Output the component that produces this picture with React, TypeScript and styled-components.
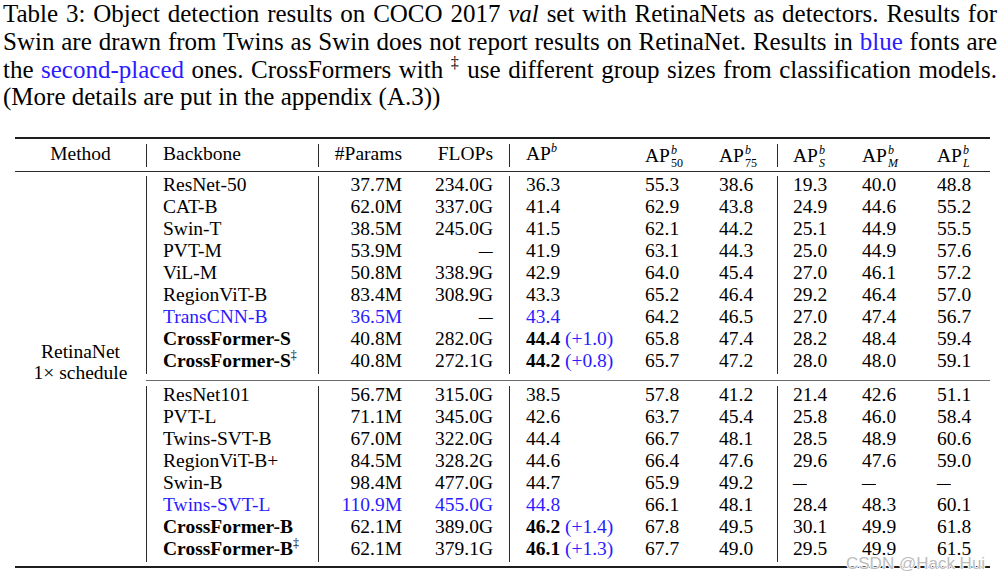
import React from 'react';
import styled, { createGlobalStyle } from 'styled-components';

const GlobalStyle = createGlobalStyle`
  html, body { margin: 0; padding: 0; background: #fff; }
  body { font-family: "Liberation Serif", "Times New Roman", serif; color: #000; }
`;

const BLUE = '#2a1cff';

type Align = 'left' | 'right' | 'center';
interface ColDef { w: number; align: Align; pl?: number; pr?: number; div?: boolean }

const COLS: ColDef[] = [
  { w: 131, align: 'center' },
  { w: 172, align: 'left', pl: 16, div: true },
  { w: 94, align: 'right', pr: 10, div: true },
  { w: 97, align: 'right', pr: 16 },
  { w: 128, align: 'left', pl: 16, div: true },
  { w: 74, align: 'left', pl: 8 },
  { w: 66, align: 'left', pl: 8 },
  { w: 77, align: 'left', pl: 15, div: true },
  { w: 75, align: 'left', pl: 8 },
  { w: 61, align: 'left', pl: 8 },
];
const BODY_COLS = COLS.slice(1);
const track = (cols: ColDef[]) => cols.map((c) => `${c.w}px`).join(' ');

const Page = styled.div`
  position: relative;
  width: 1000px;
  height: 582px;
  overflow: hidden;
  background: #fff;
`;

const Caption = styled.div`
  padding: 0 3px;
  font-size: 25px;
  line-height: 27.75px;
  height: 111px;
  color: #000;
`;

const CaptionLine = styled.div<{ $last?: boolean }>`
  text-align: justify;
  text-align-last: ${(p) => (p.$last ? 'left' : 'justify')};
`;

const Blue = styled.span`
  color: ${BLUE};
`;

const Em = styled.em`
  font-style: italic;
`;

const CapSup = styled.sup`
  font-size: 16px;
  line-height: 0;
  vertical-align: 10px;
`;

const Table = styled.div`
  margin: 26px 0 0 15px;
  width: 975px;
  display: flex;
  flex-direction: column;
  font-size: 19.5px;
`;

const Rule = styled.div<{ $w: number; $c: string; $mt: number }>`
  height: ${(p) => p.$w}px;
  background: ${(p) => p.$c};
  margin-top: ${(p) => p.$mt}px;
`;

const Row = styled.div<{ $cols: string; $mt?: number }>`
  display: grid;
  grid-template-columns: ${(p) => p.$cols};
  margin-top: ${(p) => p.$mt ?? 0}px;
`;

const Group = styled.div<{ $mt?: number }>`
  display: flex;
  flex-direction: column;
  margin-top: ${(p) => p.$mt ?? 0}px;
`;

const Cell = styled.div<{ $align: Align; $pl?: number; $pr?: number; $div?: boolean }>`
  box-sizing: border-box;
  height: 22px;
  line-height: 18px;
  padding: 0 ${(p) => p.$pr ?? 0}px 4px ${(p) => p.$pl ?? 0}px;
  text-align: ${(p) => p.$align};
  border-left: ${(p) => (p.$div ? '1px solid #2a2a2a' : 'none')};
  white-space: nowrap;
`;

const HeadCell = styled(Cell)`
  height: 23px;
  line-height: 20px;
  padding-bottom: 3px;
`;

const Body = styled.div`
  display: flex;
  margin-top: 4px;
`;

const MethodCell = styled.div`
  width: 131px;
  flex: none;
  display: flex;
  flex-direction: column;
  justify-content: center;
  align-items: center;
  line-height: 21px;
  padding-bottom: 14px;
  box-sizing: border-box;
`;

const Groups = styled.div`
  display: flex;
  flex-direction: column;
  width: 844px;
`;

const Sup = styled.span<{ $italic?: boolean }>`
  font-size: 12px;
  line-height: 0;
  vertical-align: 8px;
  font-style: ${(p) => (p.$italic ? 'italic' : 'normal')};
  font-weight: normal;
`;

const Scripts = styled.span`
  display: inline-flex;
  flex-direction: column;
  font-size: 12px;
  line-height: 13px;
  vertical-align: 8px;
  margin-left: 1px;
`;

const Script = styled.span<{ $italic?: boolean }>`
  font-style: ${(p) => (p.$italic ? 'italic' : 'normal')};
`;

const Bold = styled.span`
  font-weight: bold;
`;

const Dash = styled.span<{ $origin: 'left' | 'right' }>`
  display: inline-block;
  transform: scaleX(1.4);
  transform-origin: ${(p) => p.$origin} center;
`;

const Watermark = styled.div`
  position: absolute;
  left: 846px;
  top: 554px;
  font-family: "Liberation Sans", Arial, sans-serif;
  font-size: 17px;
  line-height: 20px;
  color: #bdbdbd;
  text-shadow: 1px 0 0 #fff, -1px 0 0 #fff, 0 1px 0 #fff, 0 -1px 0 #fff;
  white-space: nowrap;
`;

const APHead: React.FC<{ sub?: string; italic?: boolean }> = ({ sub, italic }) =>
  sub ? (
    <>
      AP
      <Scripts>
        <Script $italic>b</Script>
        <Script $italic={italic}>{sub}</Script>
      </Scripts>
    </>
  ) : (
    <>
      AP<Sup $italic>b</Sup>
    </>
  );

const HEADERS: React.ReactNode[] = [
  'Method',
  'Backbone',
  '#Params',
  'FLOPs',
  <APHead key="ap" />,
  <APHead key="ap50" sub="50" />,
  <APHead key="ap75" sub="75" />,
  <APHead key="aps" sub="S" italic />,
  <APHead key="apm" sub="M" italic />,
  <APHead key="apl" sub="L" italic />,
];

type Field = 'name' | 'params' | 'flops' | 'ap';
interface Entry {
  name: string;
  ours?: boolean;
  dagger?: boolean;
  blue?: Field[];
  gain?: string;
  vals: string[];
}

const GROUP1: Entry[] = [
  { name: 'ResNet-50', vals: ['37.7M', '234.0G', '36.3', '55.3', '38.6', '19.3', '40.0', '48.8'] },
  { name: 'CAT-B', vals: ['62.0M', '337.0G', '41.4', '62.9', '43.8', '24.9', '44.6', '55.2'] },
  { name: 'Swin-T', vals: ['38.5M', '245.0G', '41.5', '62.1', '44.2', '25.1', '44.9', '55.5'] },
  { name: 'PVT-M', vals: ['53.9M', '–', '41.9', '63.1', '44.3', '25.0', '44.9', '57.6'] },
  { name: 'ViL-M', vals: ['50.8M', '338.9G', '42.9', '64.0', '45.4', '27.0', '46.1', '57.2'] },
  { name: 'RegionViT-B', vals: ['83.4M', '308.9G', '43.3', '65.2', '46.4', '29.2', '46.4', '57.0'] },
  { name: 'TransCNN-B', blue: ['name', 'params', 'ap'], vals: ['36.5M', '–', '43.4', '64.2', '46.5', '27.0', '47.4', '56.7'] },
  { name: 'CrossFormer-S', ours: true, gain: '(+1.0)', vals: ['40.8M', '282.0G', '44.4', '65.8', '47.4', '28.2', '48.4', '59.4'] },
  { name: 'CrossFormer-S', ours: true, dagger: true, gain: '(+0.8)', vals: ['40.8M', '272.1G', '44.2', '65.7', '47.2', '28.0', '48.0', '59.1'] },
];

const GROUP2: Entry[] = [
  { name: 'ResNet101', vals: ['56.7M', '315.0G', '38.5', '57.8', '41.2', '21.4', '42.6', '51.1'] },
  { name: 'PVT-L', vals: ['71.1M', '345.0G', '42.6', '63.7', '45.4', '25.8', '46.0', '58.4'] },
  { name: 'Twins-SVT-B', vals: ['67.0M', '322.0G', '44.4', '66.7', '48.1', '28.5', '48.9', '60.6'] },
  { name: 'RegionViT-B+', vals: ['84.5M', '328.2G', '44.6', '66.4', '47.6', '29.6', '47.6', '59.0'] },
  { name: 'Swin-B', vals: ['98.4M', '477.0G', '44.7', '65.9', '49.2', '–', '–', '–'] },
  { name: 'Twins-SVT-L', blue: ['name', 'params', 'flops', 'ap'], vals: ['110.9M', '455.0G', '44.8', '66.1', '48.1', '28.4', '48.3', '60.1'] },
  { name: 'CrossFormer-B', ours: true, gain: '(+1.4)', vals: ['62.1M', '389.0G', '46.2', '67.8', '49.5', '30.1', '49.9', '61.8'] },
  { name: 'CrossFormer-B', ours: true, dagger: true, gain: '(+1.3)', vals: ['62.1M', '379.1G', '46.1', '67.7', '49.0', '29.5', '49.9', '61.5'] },
];

const FIELD_BY_INDEX: (Field | null)[] = ['params', 'flops', 'ap', null, null, null, null, null];

const renderValue = (v: string, col: ColDef) =>
  v === '–' ? <Dash $origin={col.align === 'right' ? 'right' : 'left'}>–</Dash> : v;

const BodyRow: React.FC<{ e: Entry }> = ({ e }) => {
  const isBlue = (f: Field | null) => !!f && !!e.blue?.includes(f);
  const nameCol = BODY_COLS[0];
  return (
    <Row $cols={track(BODY_COLS)}>
      <Cell $align={nameCol.align} $pl={nameCol.pl} $pr={nameCol.pr} $div={nameCol.div}>
        {e.ours ? (
          <Bold>
            {e.name}
            {e.dagger && <Sup>‡</Sup>}
          </Bold>
        ) : isBlue('name') ? (
          <Blue>{e.name}</Blue>
        ) : (
          e.name
        )}
      </Cell>
      {e.vals.map((v, i) => {
        const col = BODY_COLS[i + 1];
        const field = FIELD_BY_INDEX[i];
        let content: React.ReactNode = renderValue(v, col);
        if (field === 'ap' && e.gain) {
          content = (
            <>
              <Bold>{v}</Bold> <Blue>{e.gain}</Blue>
            </>
          );
        } else if (isBlue(field)) {
          content = <Blue>{content}</Blue>;
        }
        return (
          <Cell key={i} $align={col.align} $pl={col.pl} $pr={col.pr} $div={col.div}>
            {content}
          </Cell>
        );
      })}
    </Row>
  );
};

export default function App() {
  return (
    <>
      <GlobalStyle />
      <Page>
        <Caption>
          <CaptionLine>
            Table 3: Object detection results on COCO 2017 <Em>val</Em> set with RetinaNets as detectors. Results for
          </CaptionLine>
          <CaptionLine>
            Swin are drawn from Twins as Swin does not report results on RetinaNet. Results in <Blue>blue</Blue> fonts are
          </CaptionLine>
          <CaptionLine>
            the <Blue>second-placed</Blue> ones. CrossFormers with <CapSup>‡</CapSup> use different group sizes from classification models.
          </CaptionLine>
          <CaptionLine $last>(More details are put in the appendix (A.3))</CaptionLine>
        </Caption>

        <Table>
          <Rule $w={2} $c="#1e1e1e" $mt={0} />
          <Row $cols={track(COLS)} $mt={5}>
            {HEADERS.map((h, i) => (
              <HeadCell key={i} $align={COLS[i].align} $pl={COLS[i].pl} $pr={COLS[i].pr} $div={COLS[i].div}>
                {h}
              </HeadCell>
            ))}
          </Row>
          <Rule $w={1} $c="#2a2a2a" $mt={4} />
          <Body>
            <MethodCell>
              <div>RetinaNet</div>
              <div>1× schedule</div>
            </MethodCell>
            <Groups>
              <Group>
                {GROUP1.map((e, i) => (
                  <BodyRow key={`a${i}`} e={e} />
                ))}
              </Group>
              <Rule $w={1} $c="#6a6a6a" $mt={6} />
              <Group $mt={5}>
                {GROUP2.map((e, i) => (
                  <BodyRow key={`b${i}`} e={e} />
                ))}
              </Group>
            </Groups>
          </Body>
          <Rule $w={2} $c="#1e1e1e" $mt={4} />
        </Table>

        <Watermark>CSDN @Hack Hui</Watermark>
      </Page>
    </>
  );
}
